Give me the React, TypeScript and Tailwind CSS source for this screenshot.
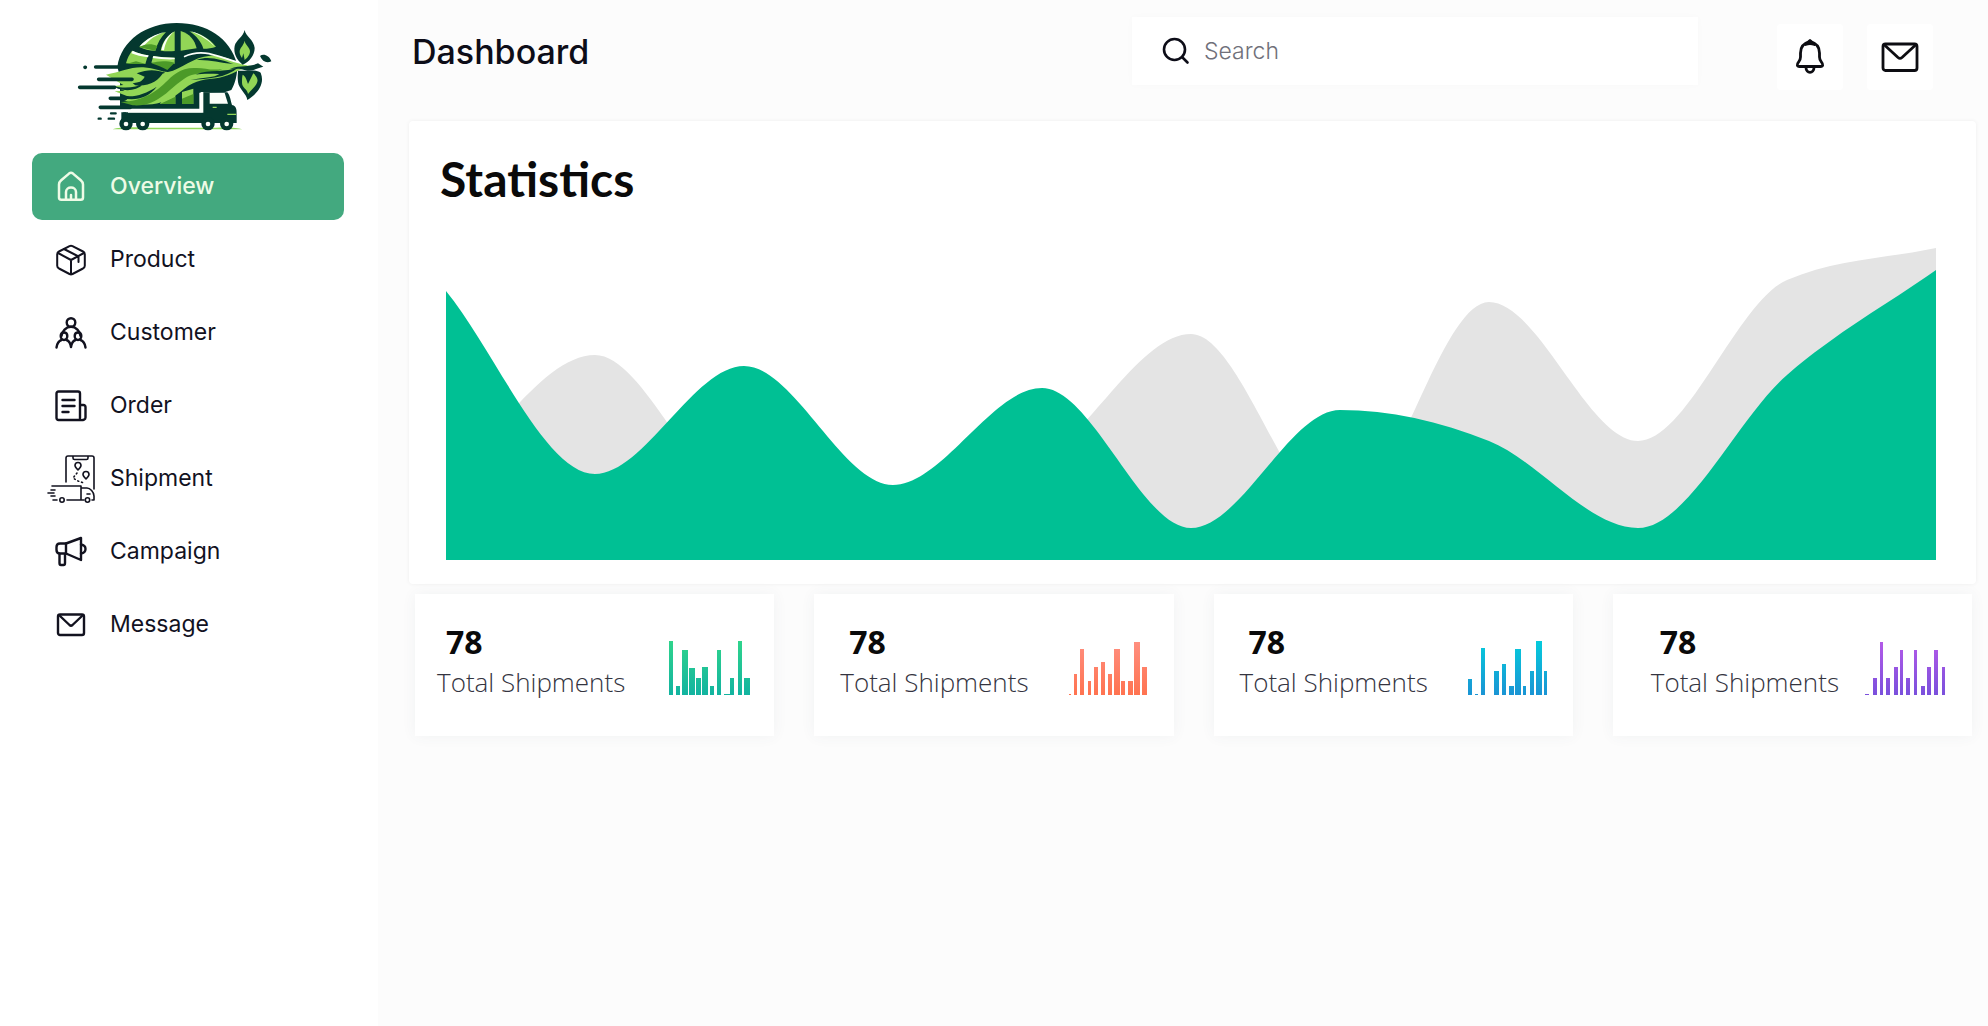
import React from "react";

type IconProps = { children: React.ReactNode; size?: string; box?: string; width?: number };

function Icon({ children, size = "size-8", box = "0 0 32 32", width = 2.2 }: IconProps) {
  return (
    <svg viewBox={box} className={`${size} shrink-0`} fill="none" stroke="currentColor" strokeWidth={width} strokeLinecap="round" strokeLinejoin="round" aria-hidden="true">
      {children}
    </svg>
  );
}

const HomeIcon = () => (
  <Icon width={2.5}>
    <path d="M4 13.5C4 11.5 4.8 10.4 6.2 9.2L14 2.6c1.3-1 2.7-1 4 0l7.8 6.6C27.2 10.4 28 11.5 28 13.5V26.5c0 1.5-.7 2.3-2.2 2.3H6.2C4.7 28.8 4 28 4 26.5Z" />
    <path d="M11 28.5V21c0-6 10-6 10 0v7.500M16 28v-4" />
  </Icon>
);

const BoxIcon = () => (
  <Icon width={2}>
    <path d="M14.500 2.200c1-.5 2-.5 3 0L28 7.500c1.200.6 1.800 1.500 1.800 2.700v11.600c0 1.200-.6 2-1.800 2.700L17.500 30c-1 .5-2 .5-3 0L4 24.500c-1.200-.7-1.800-1.500-1.800-2.700V10.200C2.200 9 2.800 8.100 4 7.500Z" />
    <path d="M3 9 16 16l13-7M16 16v14M9 5l14.500 7.500V18" />
  </Icon>
);

const PeopleIcon = () => (
  <Icon width={2.400}>
    <circle cx="16" cy="5.500" r="4.300" />
    <path d="M6.500 19c.5-5 4.500-9.200 9.500-9.200s9 4.200 9.500 9.200" />
    <path d="M9 15.500c-2 0-3.300 1.500-3.300 3.500S7 23 9 23s3.300-2 3.300-4-1.300-3.500-3.300-3.500ZM23 15.500c-2 0-3.300 1.500-3.300 3.500S21 23 23 23s3.300-2 3.300-4-1.300-3.500-3.300-3.500Z" />
    <path d="M1.500 30.500c.5-3.500 2-6.500 5-7.500M11.500 23c2.500.8 4 3.500 4.500 7 .5-3.500 2-6.200 4.500-7M25.500 23c3 1 4.500 4 5 7.500" />
  </Icon>
);

const OrderIcon = () => (
  <Icon width={2.4}>
    <path d="M25 30H3.500C2.300 30 1.500 29.200 1.500 28V3.500c0-1.200.8-2 2-2h19.500c1.200 0 2 .8 2 2V30c3.500.5 5.500-.5 5.500-2.500V17c0-1.200-.8-2-2-2H25" />
    <path d="M7.500 10h12M7.500 16h12M7.500 22h6" />
  </Icon>
);

const ShipmentIcon = () => (
  <Icon size="size-12" box="0 0 48 48" width={1.6}>
    <path d="M19 27V3c0-1.400.6-2 2-2h24c1.400 0 2 .6 2 2v31M26 1v2c0 1 .5 1.500 1.500 1.500h12c1 0 1.500-.5 1.500-1.500V1" />
    <path d="M31 15c-2-2-3-3.200-3-4.500a3 3 0 0 1 6 0c0 1.300-1 2.500-3 4.500ZM39 24c-2-2-3-3.200-3-4.500a3 3 0 0 1 6 0c0 1.300-1 2.500-3 4.500Z" />
    <path d="m30 18-4 5 5 3 6 2" strokeDasharray="1 3" />
    <path d="M5 31h29v14H20M34 33h6c3 0 7 4 7 8v4h-2M34 45h3M10 45H6M1 38h6M4 35h4M4 41h4M40 39h3" />
    <circle cx="15" cy="45" r="2.2" />
    <circle cx="40.5" cy="45" r="2.2" />
  </Icon>
);

const CampaignIcon = () => (
  <Icon width={2.4}>
    <path d="M26 2v22L11 17.500H5C3 17.500 1.500 16 1.500 14v-3C1.500 9 3 7.500 5 7.500h6Z" />
    <path d="M11 7.500v10M26 8.500c6 1 6 8 0 9M4.500 18v9c0 1 .5 2 1.500 2h2.500c1 0 1.500-1 1.500-2v-9" />
  </Icon>
);

const MailIcon = () => (
  <Icon width={2.4}>
    <rect x="3" y="5.5" width="26" height="20.5" rx="2" />
    <path d="m5 7 9.500 9c1 .9 2 .9 3 0L27 7" />
  </Icon>
);

const LargeMailIcon = () => (
  <Icon size="size-10" box="0 0 40 40" width={2.8}>
    <rect x="3" y="7" width="34" height="26.5" rx="2.5" />
    <path d="m5 8.500 13 12c1.400 1.200 2.600 1.200 4 0l13-12" />
  </Icon>
);

const BellIcon = () => (
  <Icon size="size-10" box="0 0 40 40" width={2.8}>
    <path d="M20 4.500C13.500 6 10.500 10.500 10.500 16v4c0 2-.6 3.300-1.800 4.800C6.500 27.500 7 29.500 9.500 29.500h21c2.500 0 3-2 .8-4.700-1.200-1.500-1.800-2.800-1.800-4.800v-4c0-5.500-3-10-9.500-11.500Z" />
    <path d="M20 3.500 15.500 7.500c3-1.300 6-1.300 9 0Z" fill="currentColor" />
    <path d="M16 30.500c0 6.500 8 6.500 8 0" />
  </Icon>
);

const SearchIcon = () => (
  <Icon size="size-7" box="0 0 28 28" width={2.6}>
    <circle cx="12.5" cy="12.5" r="10.5" />
    <path d="m20.500 20.500 5 5" />
  </Icon>
);

function Logo() {
  return (
    <svg viewBox="0 0 690 390" className="h-[130px] w-[230px]" role="img" aria-label="Green logistics">
      <path d="M158 358c20-8 70-6 110-5h200c35-2 65 0 80 5Z" fill="#8fd85a" />
      <path d="M172 170C184 92 258 39 350 39c90 0 160 44 182 125 0 30-6 54-18 76l-18 6-78 2v48H180V200Z" fill="#04382f" />
      <g fill="#92d656">
        <path d="M238 110c18-22 46-36 80-44-16 16-26 34-32 56-18 0-34-4-48-12Z" />
        <path d="M302 122c6-28 20-46 42-58v59c-14 1-28 1-42-1Z" />
        <path d="M362 63c28 8 42 28 48 52l-48 7Z" />
        <path d="M388 64c34 6 60 22 80 46-12 4-24 6-38 6-6-20-20-38-42-52Z" />
        <path d="M198 160c4-16 10-26 18-38 14 6 28 10 48 14l-8 26Z" />
        <path d="M274 158l6-20c20 4 42 5 64 5v18Z" />
        <path d="M300 282c14-20 30-30 46-38v38ZM366 246l34-10v46h-34Z" />
      </g>
      <path d="M240 108c20-22 46-36 76-42-28 8-48 22-66 44ZM304 120c6-26 18-44 38-55-16 14-26 32-30 56ZM218 122c16 8 32 12 48 14l-2 6c-20-2-36-6-50-12ZM280 138c20 4 42 5 64 5v5c-24 1-46-1-66-4ZM392 64c32 8 54 22 72 46-18-18-38-32-72-46Z" fill="#fcfffa" />
      <g fill="#4c9a28">
        <path d="m198 162 30-8 30 8ZM274 160c20-8 44-8 70-2l-22 22c-16-8-30-14-48-20ZM300 282l46-22v22ZM366 266l34-14v30h-34Z" />
        <path d="M238 112c14-10 36-12 54-4l-6 14Z" />
      </g>
      <path d="M138 194c44-8 74-24 112-22 34 2 52 14 74 14 40-8 76-46 126-49 54-3 80 28 132 32-48 6-66 28-104 34-42 6-70 4-106 34-38 34-80 50-122 46-32 0-44-8-68-17l34-2-52-20 30-2-32-14 28-3Z" fill="#92d656" />
      <path d="M182 276c68-2 104-30 132-56 24-24 46-46 88-46 32-2 52 10 86 2-42 24-78 4-112 28-48 30-82 88-158 82Z" fill="#4c9a28" />
      <path d="M230 190c36-14 60-10 86-2-30 8-50 30-88 34 16-8 22-14 26-22ZM218 220c36-6 60-14 94-36-16 30-44 46-86 42ZM406 194c44-18 88-4 130-22-40 34-92 34-144 38 48-10 68-6 86-18-24 0-46-2-72 2ZM160 228c40 10 68 2 92-6-24 20-50 22-78 14ZM184 256c34 8 70-2 106-26-24 34-66 44-102 34ZM410 150c36-14 76 0 110 12-42-4-74-14-110-12Z" fill="#04382f" />
      <path d="M372 140c70-32 116 12 194 24" fill="none" stroke="#fcfffa" strokeWidth="5" />
      <g stroke="#04382f" strokeLinecap="round" strokeWidth="11">
        <path d="M75 172h1M107 171h82M116 208h100M59 232h105M151 265h46M121 292h90" />
        <path d="M153 310h14M116 326h6M146 326h16M192 310h4" strokeWidth="7" />
      </g>
      <path d="M184 307h242v-60h76c8 8 10 26 14 38 16 2 14 20 14 34v20H184Z" fill="#04382f" />
      <path d="M204 304h222v-58" fill="none" stroke="#fcfffa" strokeWidth="8" />
      <path d="M449 249h45l10 32h-55Z" fill="#fcfffa" />
      <path d="M458 292h12M502 313h26" stroke="#92d656" strokeWidth="4" />
      {[198, 248, 444, 500].map((cx) => (
        <g key={cx}>
          <circle cx={cx} cy="341" r="20" fill="#04382f" />
          <circle cx={cx} cy="342" r="7" fill="#fcfffa" />
        </g>
      ))}
      <path d="M554 60c2 18 28 30 30 54 0 22-16 42-36 50-20-16-28-36-24-56 4-18 26-28 30-48Z" fill="#04382f" />
      <path d="M554 92c2 14 16 20 16 32 0 10-8 20-16 26l-4-20-4 14c-10-14-8-24-2-32 4-6 8-12 10-20Z" fill="#92d656" />
      <path d="M534 182c20 2 50-6 68 6 14 34-10 64-40 82-2-18-26-34-28-54-2-16 0-24 0-34Z" fill="#04382f" />
      <path d="M548 194c10 6 12 16 16 28l16-32c10 8 18 20 8 34-6 10-16 16-24 28-2-16-18-18-18-34 0-10 0-18 2-24Z" fill="#92d656" />
      <path d="M510 176c36-12 60-4 84-16l16 10c-20 4-30 14-48 12l-24-6ZM600 138c10-8 28-2 34 16-14 6-26 2-34-16Z" fill="#04382f" />
    </svg>
  );
}

const navItems = [
  { label: "Overview", icon: <HomeIcon />, active: true },
  { label: "Product", icon: <BoxIcon /> },
  { label: "Customer", icon: <PeopleIcon /> },
  { label: "Order", icon: <OrderIcon /> },
  { label: "Shipment", icon: <ShipmentIcon /> },
  { label: "Campaign", icon: <CampaignIcon /> },
  { label: "Message", icon: <MailIcon /> },
];

function Sidebar() {
  return (
    <aside className="flex w-[378px] shrink-0 flex-col bg-white px-8 pt-[10px]">
      <div className="pl-7">
        <Logo />
      </div>
      <nav aria-label="Main" className="mt-[13px]">
        <ul className="flex flex-col gap-[6px]">
          {navItems.map(({ label, icon, active }) => (
            <li key={label}>
              <a
                href="#"
                aria-current={active ? "page" : undefined}
                className={`flex h-[67px] w-[312px] items-center gap-[15px] rounded-[10px] pl-[15px] text-[23px] ${active ? "bg-[#43a97f] font-medium text-[#eefbe6]" : "text-[#12121f]"}`}
              >
                <span className="flex w-12 justify-center">{icon}</span>
                <span>{label}</span>
              </a>
            </li>
          ))}
        </ul>
      </nav>
    </aside>
  );
}

function Header() {
  return (
    <header className="flex h-[121px] items-start pr-[55px] pt-[17px]">
      <h1 className="flex-1 pt-[11px] text-[34px] leading-[48px] font-medium text-[#0d0d18]">Dashboard</h1>
      <label className="flex h-[68px] w-[566px] items-center gap-[14px] bg-white pl-[30px] text-[#0d0d18] shadow-[0_0_8px_rgba(0,0,0,0.02)]">
        <SearchIcon />
        <input type="search" aria-label="Search" placeholder="Search" className="min-w-0 flex-1 bg-transparent text-[23px] font-light outline-none placeholder:text-[#70707a]" />
      </label>
      <div className="mt-[7px] ml-[79px] flex gap-6">
        <button type="button" aria-label="Notifications" className="flex size-[66px] items-center justify-center rounded bg-white text-[#0d0d12]">
          <BellIcon />
        </button>
        <button type="button" aria-label="Messages" className="flex size-[66px] items-center justify-center rounded bg-white text-[#0d0d12]">
          <LargeMailIcon />
        </button>
      </div>
    </header>
  );
}

const STEP = 149;
const BASE = 312;
const greyValues = [81, 205, 61, 55, 100, 226, 41, 258, 119, 280, 312];
const greenValues = [269, 86, 194, 75, 172, 32, 150, 119, 32, 185, 290];

// Monotone cubic through the values, closed down to the base line.
function areaPath(values: number[]) {
  const ys = values.map((v) => BASE - v);
  const last = ys.length - 1;
  const s = ys.slice(1).map((y, i) => y - ys[i]);
  const m = ys.map((_, i) => {
    if (i === 0) return s[0];
    if (i === last) return s[last - 1];
    const a = s[i - 1];
    const b = s[i];
    return a * b <= 0 ? 0 : Math.sign(a) * Math.min(Math.abs(a) * 2, Math.abs(b) * 2, Math.abs(a + b) / 2);
  });
  let d = `M0 ${BASE}V${ys[0]}`;
  for (let i = 0; i < last; i++) {
    d += `C${(i + 1 / 3) * STEP} ${ys[i] + m[i] / 3} ${(i + 2 / 3) * STEP} ${ys[i + 1] - m[i + 1] / 3} ${(i + 1) * STEP} ${ys[i + 1]}`;
  }
  return `${d}V${BASE}Z`;
}

function Statistics() {
  return (
    <section className="mr-3 -ml-[3px] rounded-sm bg-white pr-10 pb-6 pl-[31px] shadow-[0_0_4px_rgba(0,0,0,0.06)]">
      <h2 className="h-[127px] pt-[30px] font-['Lato',sans-serif] text-[48px] leading-[56px] font-bold text-[#0a0a0a]">Statistics</h2>
      <div className="pl-[6px]">
        <svg viewBox="0 0 1490 312" preserveAspectRatio="none" className="block h-[312px] w-full" role="img" aria-label="Shipment statistics area chart">
          <path d={areaPath(greyValues)} fill="#e4e4e4" />
          <path d={areaPath(greenValues)} fill="#00c094" />
        </svg>
      </div>
    </section>
  );
}

type Bar = [x: number, w: number, h: number];

const cards: { id: string; pad: string; from: string; to: string; bars: Bar[] }[] = [
  {
    id: "green",
    pad: "pl-[22px] pr-6",
    from: "#2fd48c",
    to: "#12b3a0",
    bars: [[0, 4, 54], [7, 4, 9], [13, 6, 45], [20, 6, 27], [27, 5, 17], [33, 6, 28], [41, 4, 9], [48, 4, 45], [55, 6, 1], [61, 4, 17], [69, 4, 54], [75, 6, 17]],
  },
  {
    id: "orange",
    pad: "pl-[26px] pr-6",
    from: "#ff8f80",
    to: "#ff7350",
    bars: [[0, 2, 1], [5, 3, 21], [11, 4, 46], [19, 3, 14], [25, 4, 28], [32, 4, 33], [39, 4, 21], [45, 6, 46], [52, 4, 14], [59, 5, 14], [65, 6, 53], [73, 5, 28]],
  },
  {
    id: "cyan",
    pad: "pl-[26px] pr-6",
    from: "#05cbdc",
    to: "#1a94d4",
    bars: [[0, 4, 16], [7, 3, 1], [13, 4, 47], [26, 5, 24], [34, 4, 31], [41, 5, 9], [47, 6, 46], [55, 3, 9], [62, 4, 24], [68, 6, 54], [76, 3, 24]],
  },
  {
    id: "purple",
    pad: "pl-[38px] pr-[26px]",
    from: "#b45ae8",
    to: "#7a50dc",
    bars: [[0, 4, 1], [8, 4, 17], [15, 3, 53], [21, 4, 17], [29, 4, 28], [35, 3, 45], [41, 4, 17], [49, 3, 45], [56, 4, 9], [62, 4, 28], [69, 4, 45], [77, 3, 28]],
  },
];

function StatCards() {
  return (
    <section aria-label="Totals" className="mt-[10px] mr-4 ml-[3px] grid grid-cols-4 gap-10">
      {cards.map(({ id, pad, from, to, bars }) => (
        <article key={id} className={`flex h-[142px] justify-between bg-white shadow-[0_0_14px_rgba(60,80,110,0.06)] ${pad}`}>
          <div className="pt-7 font-['Open_Sans',sans-serif]">
            <p className="pl-[9px] text-[32px] leading-10 font-bold text-[#0a0a0a]">78</p>
            <p className="text-[26px] leading-10 font-light whitespace-nowrap text-[#34343f]">Total Shipments</p>
          </div>
          <svg viewBox="0 0 81 54" className="mt-[47px] h-[54px] w-[81px] shrink-0" role="img" aria-label="Shipment trend">
            <defs>
              <linearGradient id={id} gradientUnits="userSpaceOnUse" x1="0" y1="0" x2="0" y2="54">
                <stop offset="0" stopColor={from} />
                <stop offset="1" stopColor={to} />
              </linearGradient>
            </defs>
            {bars.map(([x, w, h]) => (
              <rect key={x} x={x} y={54 - h} width={w} height={h} fill={`url(#${id})`} />
            ))}
          </svg>
        </article>
      ))}
    </section>
  );
}

export default function App() {
  return (
    <div className="flex min-h-screen bg-[#fcfcfc] font-['Inter',sans-serif]">
      <Sidebar />
      <main className="min-w-0 flex-1 pl-[34px]">
        <Header />
        <Statistics />
        <StatCards />
      </main>
    </div>
  );
}
